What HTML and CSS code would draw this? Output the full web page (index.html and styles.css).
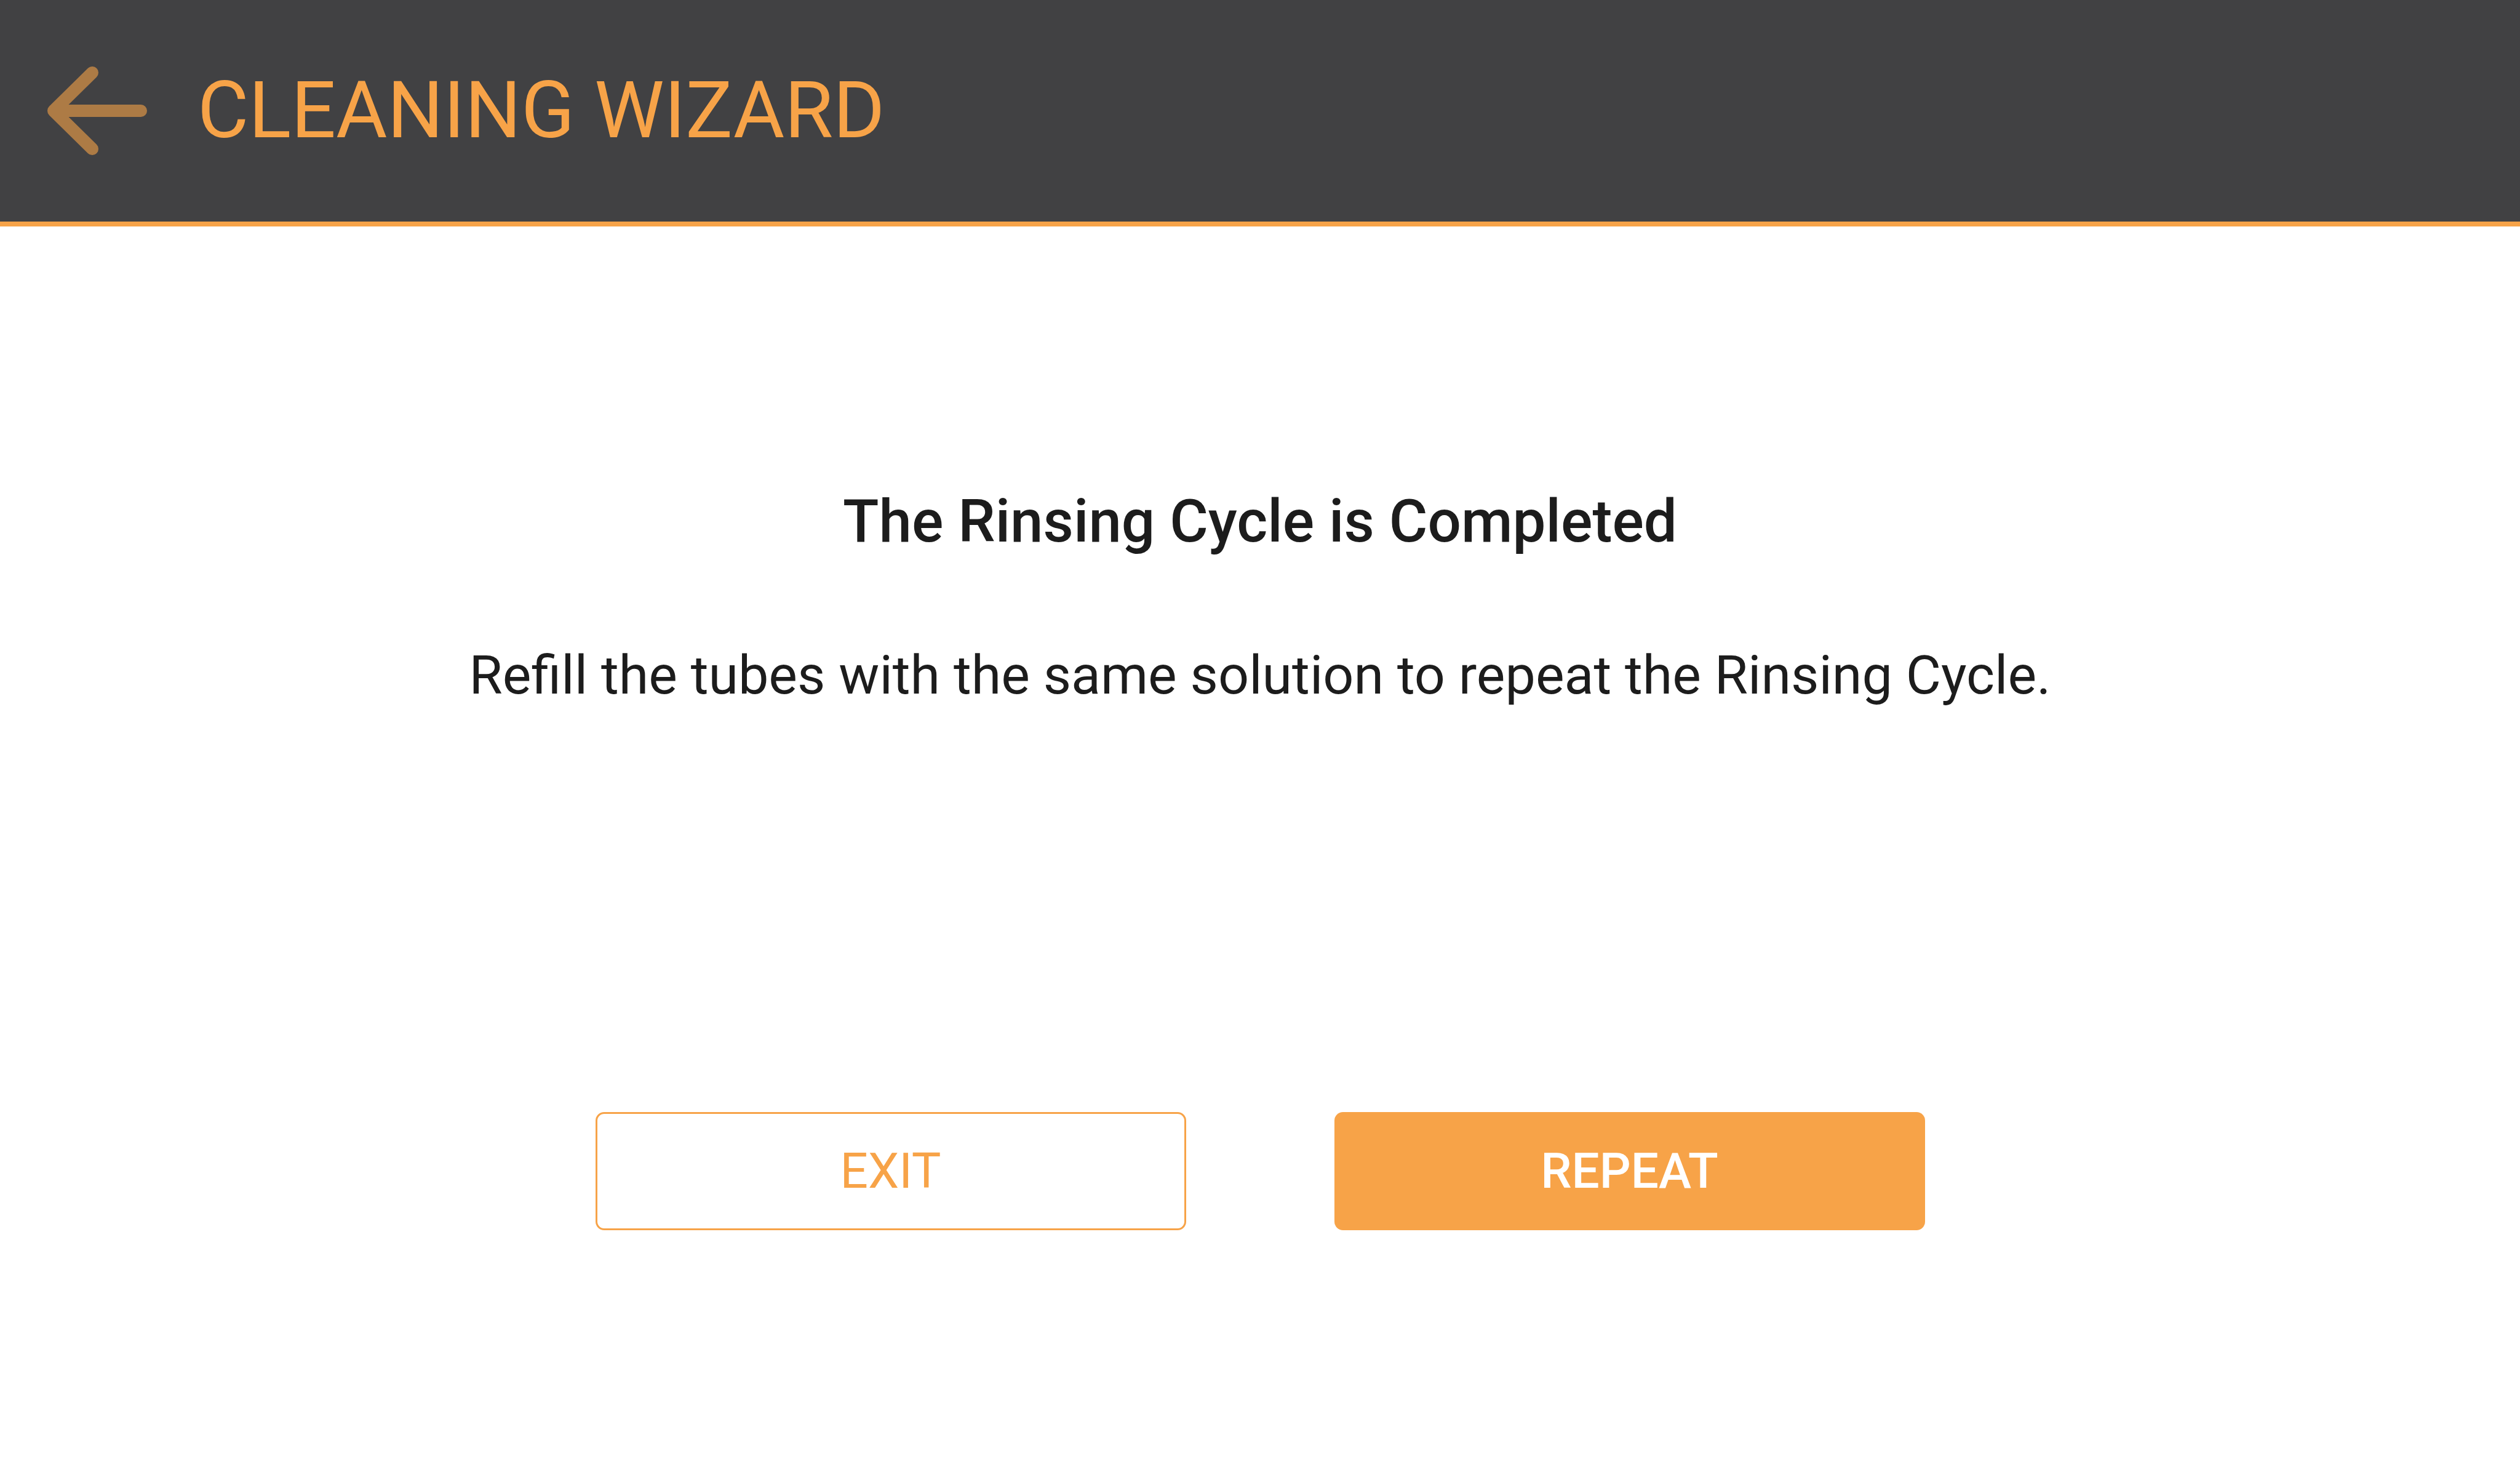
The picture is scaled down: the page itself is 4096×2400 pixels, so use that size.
FILE: index.html
```html
<!DOCTYPE html>
<html lang="en">
<head>
    <meta charset="UTF-8">
    <meta name="viewport" content="width=device-width, initial-scale=1.0">
    <title>Cleaning Wizard</title>
    <link rel="stylesheet" href="styles.css">
</head>
<body>

    <header class="topbar">
        <button class="back" type="button" aria-label="Back">
            <svg width="182" height="164" viewBox="0 0 182 164">
                <path d="M20 82 H162 M83 20 L20 82 L83 144" fill="none" stroke="#ad7b45" stroke-width="20" stroke-linecap="round" stroke-linejoin="round"/>
            </svg>
        </button>
        <h1 class="title">CLEANING WIZARD</h1>
    </header>

    <main class="content">
        <h2 class="heading">The Rinsing Cycle is Completed</h2>
        <p class="message">Refill the tubes with the same solution to repeat the Rinsing Cycle.</p>

        <div class="actions">
            <button class="btn btn-outline" type="button">EXIT</button>
            <button class="btn btn-fill" type="button">REPEAT</button>
        </div>
    </main>

</body>
</html>
```

FILE: styles.css
```css
body {
    margin: 0;
    font-family: Roboto, "Liberation Sans", sans-serif;
    background: white;
    color: #1c1c1c;
}
.topbar {
    height: 360px;
    background: #414143;
    border-bottom: 8px solid #f7a348;
    display: flex;
    align-items: center;
    padding-left: 67px;
}
.back {
    background: none;
    border: none;
    padding: 0;
    display: flex;
    cursor: pointer;
}
.title {
    margin: 0 0 0 72px;
    font-size: 128px;
    font-weight: 400;
    line-height: 1.2;
    color: #f7a348;
}
.content {
    display: flex;
    flex-direction: column;
    align-items: center;
    padding-top: 422px;
}
.heading {
    margin: 0;
    font-size: 96px;
    font-weight: 500;
    line-height: 1.2;
}
.message {
    margin: 139px 0 0;
    font-size: 88px;
    line-height: 1.2;
}
.actions {
    margin-top: 657px;
    display: flex;
    gap: 241px;
}
.btn {
    width: 960px;
    height: 192px;
    border-radius: 14px;
    font-family: inherit;
    font-size: 80px;
    cursor: pointer;
}
.btn-outline {
    background: white;
    border: 3px solid #f7a348;
    color: #f7a348;
    font-weight: 400;
}
.btn-fill {
    background: #f7a348;
    border: none;
    color: white;
    font-weight: 500;
}
```
